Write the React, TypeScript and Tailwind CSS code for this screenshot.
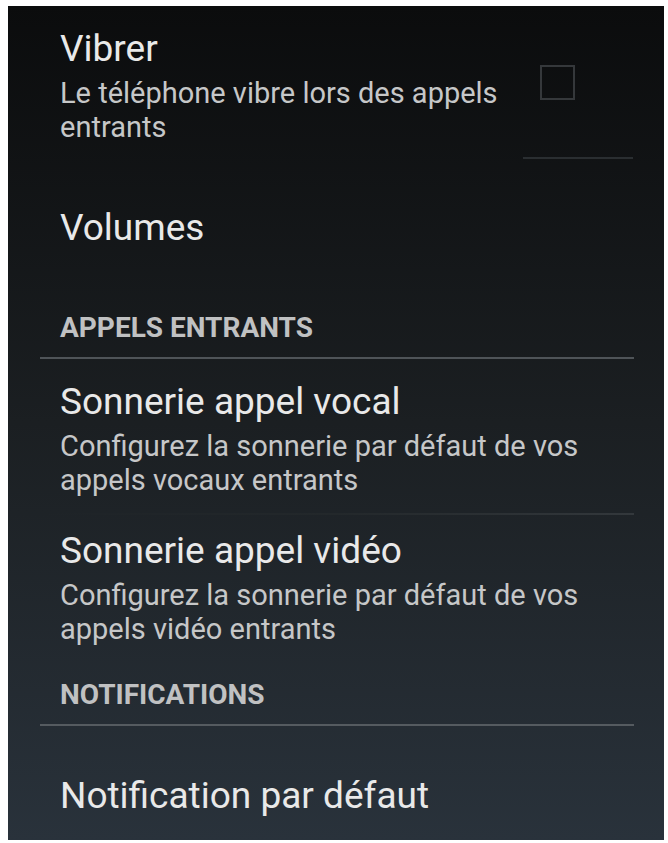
import React from 'react';

function Title({ children }: { children: React.ReactNode }) {
  return <p className="text-[37px] leading-[42px] text-[#e9e9e9]">{children}</p>;
}

function Summary({ children }: { children: React.ReactNode }) {
  return <p className="mt-[6px] text-[29px] leading-[34px] text-[#c6c7c8]">{children}</p>;
}

function SectionHeader({ label, className }: { label: string; className: string }) {
  return (
    <p className={`pl-[52px] text-[28px] leading-[34px] font-bold text-[#c0c1c2] ${className}`}>{label}</p>
  );
}

export default function App() {
  return (
    <div className="min-h-screen bg-white pt-[6px] pl-2 pr-1 pb-[3px]">
      <div className="flex h-[834px] flex-col bg-gradient-to-b from-[#0b0c0d] via-[#1b1f22] to-[#29323b] font-['Roboto','Noto_Sans',sans-serif]">
        {/* Vibrer */}
        <div className="flex gap-5 pt-[22px] pl-[52px] pr-[89px]">
          <div className="flex-1">
            <Title>Vibrer</Title>
            <Summary>Le téléphone vibre lors des appels entrants</Summary>
          </div>
          <div className="mt-[37px] h-[35px] w-[35px] shrink-0 border-2 border-[#35383b]" />
        </div>
        <div className="mt-[13px] mr-[31px] h-[2px] w-[110px] self-end bg-[#2a2e31]" />

        {/* Volumes */}
        <div className="mt-[48px] pl-[52px]">
          <Title>Volumes</Title>
        </div>

        <SectionHeader label="APPELS ENTRANTS" className="mt-[62px]" />
        <div className="mt-[12px] ml-8 mr-[30px] h-[2px] bg-[#4f5458]" />

        <div className="mt-[22px] pl-[52px] pr-[30px]">
          <Title>Sonnerie appel vocal</Title>
          <Summary>Configurez la sonnerie par défaut de vos appels vocaux entrants</Summary>
        </div>
        <div className="mt-[16px] ml-8 mr-[30px] h-[2px] bg-gradient-to-r from-transparent via-[#23282b] to-[#33383c]" />

        <div className="mt-[15px] pl-[52px] pr-[30px]">
          <Title>Sonnerie appel vidéo</Title>
          <Summary>Configurez la sonnerie par défaut de vos appels vidéo entrants</Summary>
        </div>

        <SectionHeader label="NOTIFICATIONS" className="mt-[32px]" />
        <div className="mt-[12px] ml-8 mr-[30px] h-[2px] bg-[#555b60]" />

        <div className="mt-[49px] pl-[52px]">
          <Title>Notification par défaut</Title>
        </div>
      </div>
    </div>
  );
}
